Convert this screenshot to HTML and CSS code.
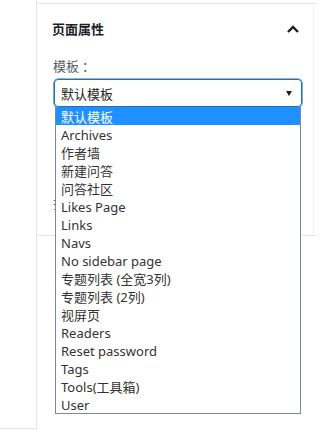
FILE: index.html
```html
<!DOCTYPE html>
<html lang="zh-CN">
<head>
<meta charset="utf-8">
<title>页面属性</title>
<link rel="stylesheet" href="styles.css">
</head>
<body>
<div class="page">
  <div class="gutter"></div>
  <div class="panel">
    <div class="section">
      <div class="header">
        <h2 class="title">页面属性</h2>
        <svg class="chevron" width="14" height="10" viewBox="0 0 14 10"><path d="M2 8 L7 3 L12 8" fill="none" stroke="#1e1e1e" stroke-width="2.4"/></svg>
      </div>
      <div class="field">
        <div class="label">模板<span class="colon">：</span></div>
        <div class="select-wrap">
          <div class="select">
            <span>默认模板</span>
            <span class="arrow"></span>
          </div>
          <ul class="list">
            <li class="active">默认模板</li>
            <li>Archives</li>
            <li>作者墙</li>
            <li>新建问答</li>
            <li>问答社区</li>
            <li>Likes Page</li>
            <li>Links</li>
            <li>Navs</li>
            <li>No sidebar page</li>
            <li>专题列表 (全宽3列)</li>
            <li>专题列表 (2列)</li>
            <li>视屏页</li>
            <li>Readers</li>
            <li>Reset password</li>
            <li>Tags</li>
            <li>Tools(工具箱)</li>
            <li>User</li>
          </ul>
        </div>
        <div class="label order">排序</div>
      </div>
    </div>
  </div>
</div>
</body>
</html>
```
FILE: styles.css
```css
html, body {
  margin: 0;
  padding: 0;
  background: #fff;
}
body {
  font-family: "Noto Sans", "Noto Sans CJK SC", sans-serif;
  font-size: 13px;
  color: #1e1e1e;
  overflow: hidden;
}
.page {
  display: flex;
  width: 317px;
  height: 431px;
}
.gutter {
  width: 36px;
  height: 428px;
  border-right: 1px solid #e2e4e7;
  border-bottom: 1px solid #e2e4e7;
  flex: none;
}
.panel {
  flex: 1;
  margin-top: 3px;
  border-top: 1px solid #e2e4e7;
}
.section {
  height: 231px;
  border-bottom: 1px solid #e2e4e7;
  position: relative;
}
.section::after {
  content: "";
  position: absolute;
  top: 1px;
  right: 3px;
  bottom: 0;
  border-right: 1px solid #f0f0f1;
}
.header {
  display: flex;
  align-items: center;
  justify-content: space-between;
  padding: 15px 17px 0 15px;
  height: 20px;
}
.title {
  margin: 0;
  font-size: 13px;
  line-height: 20px;
  font-weight: 700;
  font-family: "Noto Sans CJK SC", sans-serif;
  color: #1e1e1e;
}
.chevron {
  display: block;
  margin-top: -1px;
}
.field {
  padding: 0 15px 0 17px;
  margin-top: 18px;
}
.label {
  font-family: "Noto Sans CJK SC", sans-serif;
  font-size: 13px;
  line-height: 18px;
  color: #555d66;
  margin-left: -1px;
}
.colon {
  padding-left: 3px;
}
.label.order {
  margin-top: 87px;
}
.select-wrap {
  position: relative;
  margin-top: 4px;
}
.select {
  box-sizing: border-box;
  height: 28px;
  border: 1px solid #2271b1;
  box-shadow: 0 0 0 0.6px #2271b1;
  border-radius: 4px;
  display: flex;
  align-items: center;
  justify-content: space-between;
  padding: 0 9px 0 6px;
  font-family: "Noto Sans CJK SC", sans-serif;
  color: #1e1e1e;
}
.arrow {
  width: 0;
  height: 0;
  border-left: 3.5px solid transparent;
  border-right: 3.5px solid transparent;
  border-top: 5px solid #1e1e1e;
  margin-top: 1px;
}
.list {
  position: absolute;
  top: 28px;
  left: 1px;
  width: 246px;
  box-sizing: border-box;
  margin: 0;
  padding: 0;
  list-style: none;
  background: #fff;
  border: 1px solid #7a87a6;
  border-top: none;
  z-index: 2;
}
.list li {
  height: 17px;
  padding-top: 1px;
  line-height: 18px;
  padding-left: 5px;
  font-family: "Noto Sans", "Noto Sans CJK SC", sans-serif;
  font-size: 13px;
  color: #333;
  white-space: nowrap;
}
.list li.active {
  background: #1e90ff;
  color: #fff;
}
```
